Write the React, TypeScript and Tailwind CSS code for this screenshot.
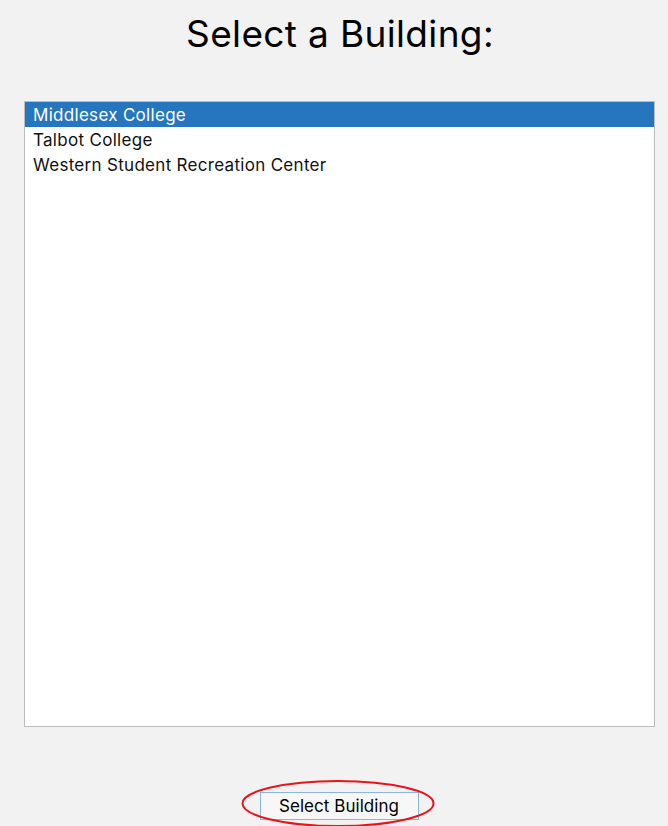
import React from "react";

const items = ["Middlesex College", "Talbot College", "Western Student Recreation Center"];

export default function App() {
  return (
    <div
      className="w-[668px] h-[826px] bg-[#f2f2f2] flex flex-col overflow-hidden"
      style={{ fontFamily: "Inter, 'Noto Sans', sans-serif" }}
    >
      <div className="h-[101px] flex justify-center pl-[12px]">
        <h1 className="text-[37px] leading-[44px] pt-[12px] tracking-[0.35px] text-black font-normal">Select a Building:</h1>
      </div>
      <div className="mx-[24px] h-[626px] w-[631px] border border-[#bdbdbd] bg-white flex flex-col">
        {items.map((it, i) => (
          <div
            key={it}
            className={
              "h-[25px] pl-[8px] pt-[2px] flex items-center text-[17px] tracking-[0.3px] " +
              (i === 0 ? "bg-[#2675bf] text-white" : "text-[#111]")
            }
          >
            {it}
          </div>
        ))}
      </div>
      <div className="flex justify-center pt-[65px] pl-[10px]">
        <div className="relative">
          <button className="w-[159px] h-[28px] border border-[#8cb4e0] bg-[#f7f7f7] text-[17px] tracking-[0.05px] text-black flex items-center justify-center pt-[1px]">
            Select Building
          </button>
          <svg
            className="absolute left-[-19px] top-[-12px] pointer-events-none"
            width="196"
            height="50"
            viewBox="0 0 196 50"
          >
            <ellipse cx="97" cy="23.5" rx="95.5" ry="22.5" fill="none" stroke="#e8141a" strokeWidth="2" />
          </svg>
        </div>
      </div>
    </div>
  );
}
